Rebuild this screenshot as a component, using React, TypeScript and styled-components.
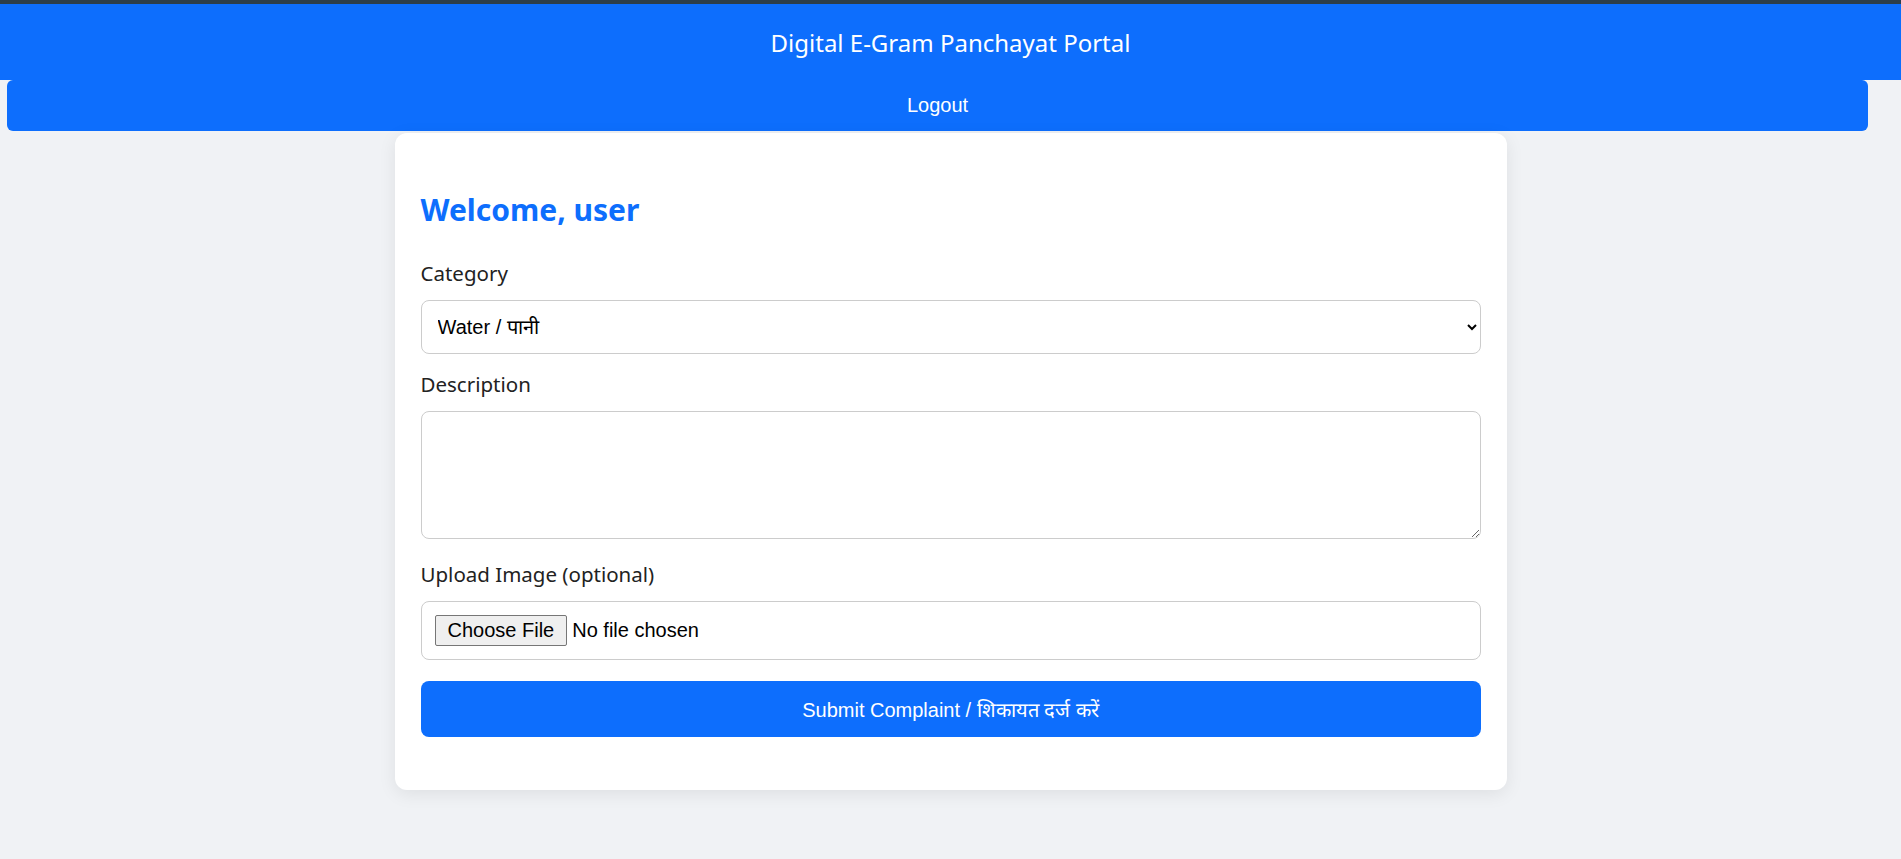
import React from "react";
import styled, { createGlobalStyle } from "styled-components";

const GlobalStyle = createGlobalStyle`
  * { box-sizing: border-box; }
  body {
    margin: 0;
    background: #f0f2f5;
    font-family: "Noto Sans", "Open Sans", sans-serif;
  }
`;

const Header = styled.header`
  background: #0d6efd;
  border-top: 4px solid #2c3e4a;
  padding: 22px 0 20px;
  text-align: center;
`;

const Title = styled.h1`
  margin: 0;
  color: #fff;
  font-size: 24px;
  line-height: 34px;
  font-weight: 400;
`;

const LogoutButton = styled.button`
  display: block;
  width: calc(100% - 40px);
  margin: 0 33px 0 7px;
  height: 51px;
  border: none;
  border-radius: 6px;
  background: #0d6efd;
  color: #fff;
  font-family: "Liberation Sans", Arial, sans-serif;
  font-size: 20px;
  cursor: pointer;
`;

const Main = styled.main`
  display: flex;
  justify-content: center;
  padding: 2px 0 60px;
`;

const Card = styled.div`
  width: 1112px;
  background: #fff;
  border-radius: 12px;
  box-shadow: 0 4px 18px rgba(0, 0, 0, 0.08);
  padding: 26px 26px 53px;
`;

const Welcome = styled.h2`
  margin: 31px 0 29px;
  color: #0d6efd;
  font-size: 30px;
  line-height: 40px;
  font-weight: 700;
`;

const Label = styled.label`
  display: block;
  color: #222;
  font-size: 20.5px;
  line-height: 28px;
  margin-bottom: 13px;
`;

const controlBase = `
  display: block;
  width: 100%;
  border: 1px solid #ccc;
  border-radius: 8px;
  background: #fff;
  font-family: "Liberation Sans", Arial, sans-serif;
  font-size: 20px;
  color: #000;
`;

const Select = styled.select`
  ${controlBase}
  height: 54px;
  padding: 0 12px;
  margin-bottom: 16px;
`;

const TextArea = styled.textarea`
  ${controlBase}
  height: 128px;
  padding: 12px;
  margin-bottom: 21px;
  resize: vertical;
`;

const FileInput = styled.input`
  ${controlBase}
  height: 59px;
  padding: 13px;
  margin-bottom: 21px;

  &::file-selector-button {
    font-family: "Liberation Sans", Arial, sans-serif;
    font-size: 20px;
    height: 31px;
    padding: 0 12px;
    margin-right: 5px;
    border: 1px solid #767676;
    border-radius: 2px;
    background: #efefef;
    color: #000;
  }
`;

const SubmitButton = styled.button`
  display: block;
  width: 100%;
  height: 56px;
  border: none;
  border-radius: 8px;
  background: #0d6efd;
  color: #fff;
  font-family: "Liberation Sans", Arial, sans-serif;
  font-size: 20px;
  cursor: pointer;
`;

export default function App() {
  return (
    <>
      <GlobalStyle />
      <Header>
        <Title>Digital E-Gram Panchayat Portal</Title>
      </Header>
      <LogoutButton>Logout</LogoutButton>
      <Main>
        <Card>
          <Welcome>Welcome, user</Welcome>
          <form onSubmit={(e) => e.preventDefault()}>
            <Label htmlFor="category">Category</Label>
            <Select id="category" defaultValue="water">
              <option value="water">Water / पानी</option>
              <option value="road">Road / सड़क</option>
              <option value="electricity">Electricity / बिजली</option>
            </Select>

            <Label htmlFor="description">Description</Label>
            <TextArea id="description" />

            <Label htmlFor="image">Upload Image (optional)</Label>
            <FileInput id="image" type="file" accept="image/*" />

            <SubmitButton type="submit">Submit Complaint / शिकायत दर्ज करें</SubmitButton>
          </form>
        </Card>
      </Main>
    </>
  );
}
